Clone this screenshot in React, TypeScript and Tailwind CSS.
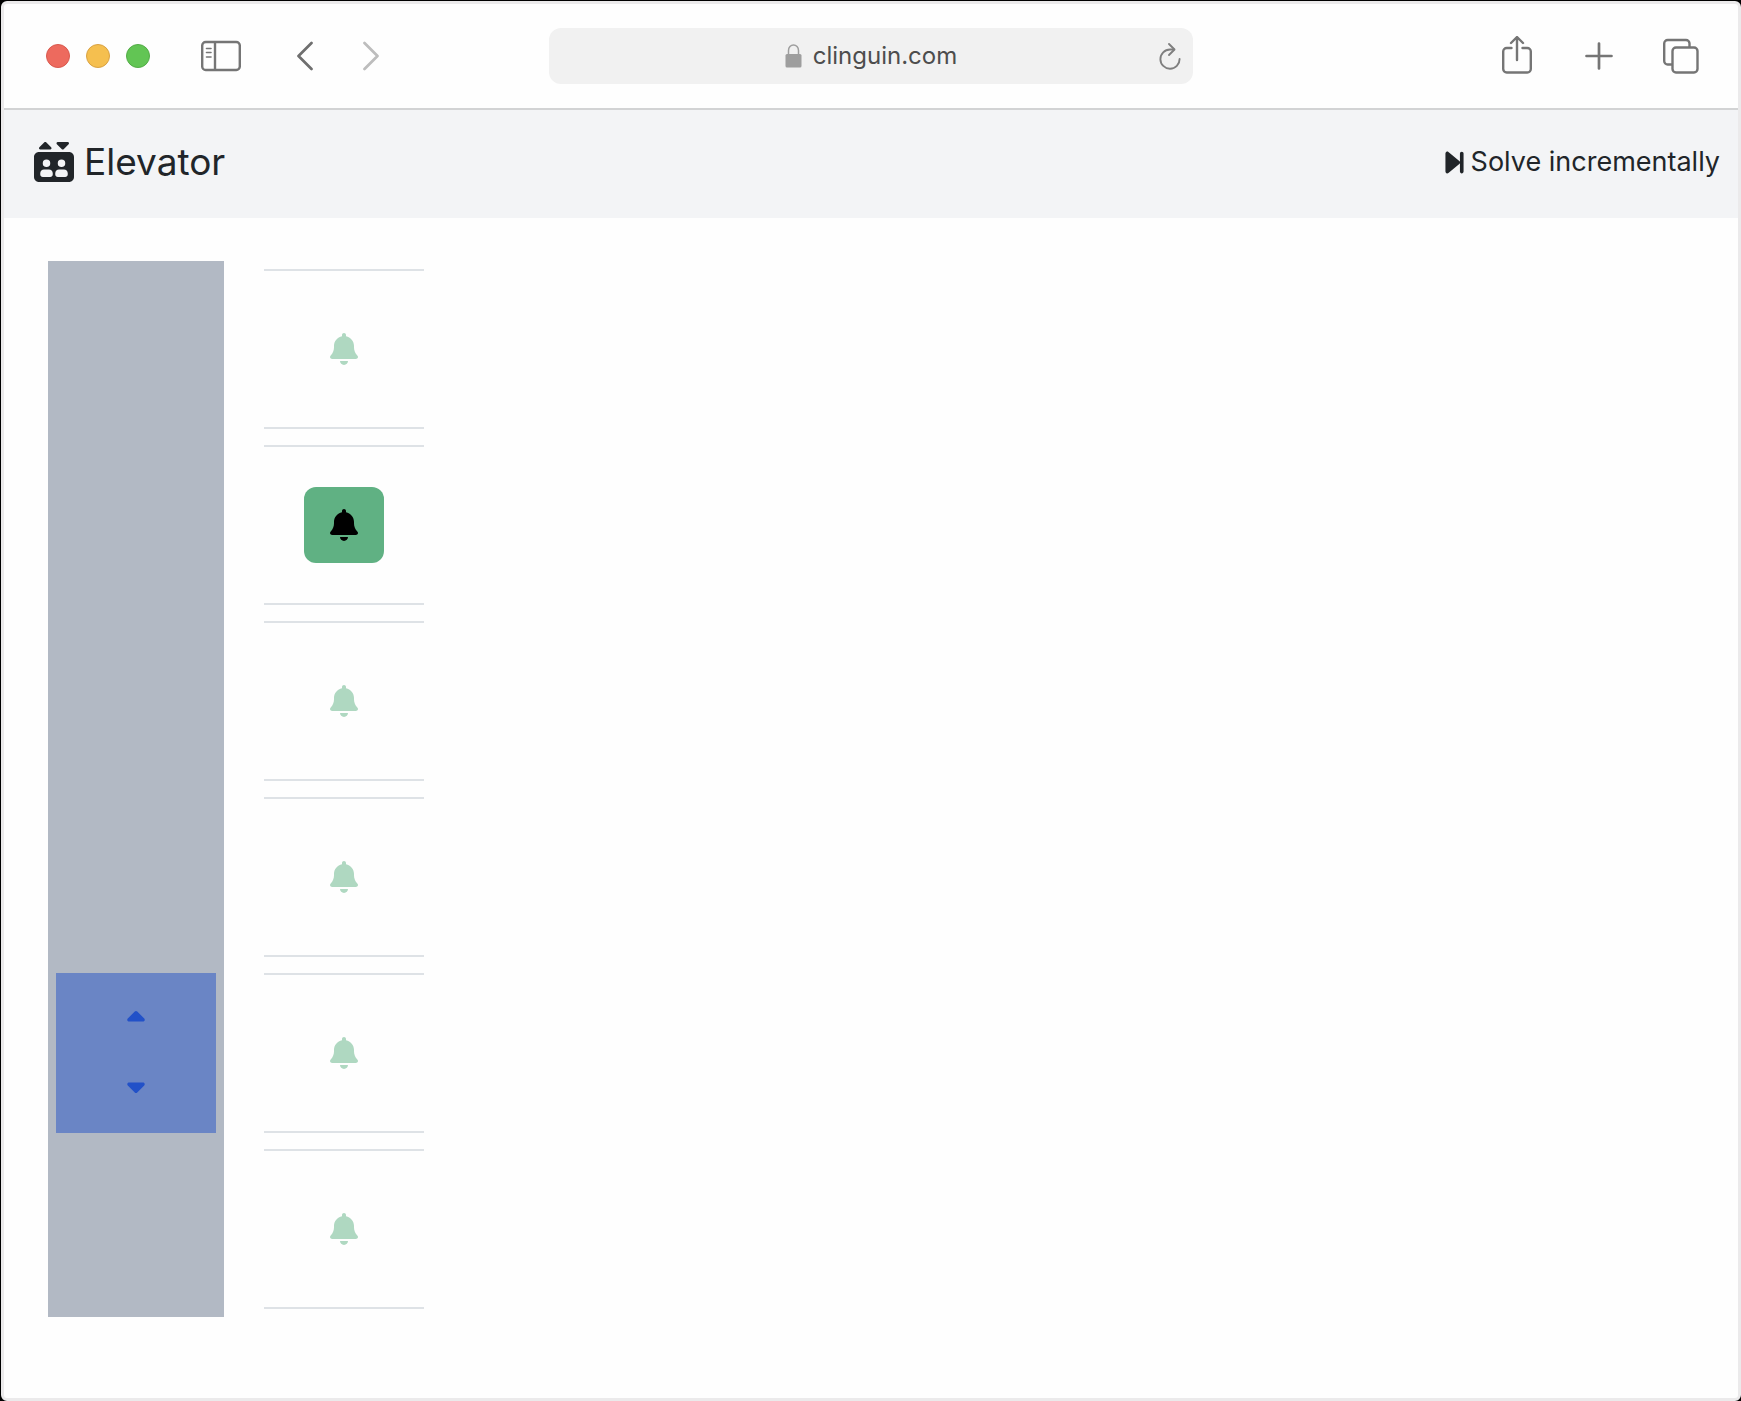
import React from "react";
import { FaBell, FaCaretDown, FaCaretUp, FaElevator, FaForwardStep } from "react-icons/fa6";

type Floor = { id: number; called: boolean };

const floors: Floor[] = [
  { id: 6, called: false },
  { id: 5, called: true },
  { id: 4, called: false },
  { id: 3, called: false },
  { id: 2, called: false },
  { id: 1, called: false },
];

const CAR_FLOOR = 2;

function Toolbar() {
  return (
    <div className="grid h-[106px] grid-cols-[1fr_644px_1fr] items-center border-b-2 border-[#d2d3d4] px-[39px]">
      <div className="flex items-center pl-[3px]">
        <div className="flex gap-4">
          <button aria-label="Close" className="size-6 rounded-full border border-[#d9594e] bg-[#ed6a5e]" />
          <button aria-label="Minimize" className="size-6 rounded-full border border-[#d9a243] bg-[#f5bf4f]" />
          <button aria-label="Zoom" className="size-6 rounded-full border border-[#53ac47] bg-[#62c554]" />
        </div>
        <button aria-label="Sidebar" className="ml-[51px] text-[#757575]">
          <svg width="40" height="32" viewBox="0 0 40 32" fill="none" stroke="currentColor" strokeWidth="2.400">
            <rect x="1.200" y="2" width="37.600" height="28" rx="3.500" />
            <path d="M14 2v28" />
            <path d="M5.500 8.500h4.500M5.500 12.500h4.500M5.500 17h4.500" strokeWidth="1.600" strokeLinecap="round" />
          </svg>
        </button>
        <button aria-label="Back" className="ml-14 text-[#6f6f6f]">
          <svg width="16" height="30" viewBox="0 0 16 30" fill="none" stroke="currentColor" strokeWidth="2.700" strokeLinecap="round" strokeLinejoin="round">
            <path d="M14.500 2L1.500 15l13 13" />
          </svg>
        </button>
        <button aria-label="Forward" className="ml-[50px] text-[#bdbdbd]">
          <svg width="16" height="30" viewBox="0 0 16 30" fill="none" stroke="currentColor" strokeWidth="2.700" strokeLinecap="round" strokeLinejoin="round">
            <path d="M1.500 2l13 13-13 13" />
          </svg>
        </button>
      </div>

      <div className="grid h-14 grid-cols-[1fr_auto_1fr] items-center rounded-xl bg-[#f1f1f1] px-3">
        <span />
        <div className="flex items-center gap-[11px] text-2xl leading-8 text-[#4d4d4d]">
          <svg width="17" height="24" viewBox="0 0 17 24" fill="none" className="text-[#9e9e9e]">
            <rect x="0.500" y="10" width="16" height="13.500" rx="1.500" fill="currentColor" />
            <path d="M3.500 11V6.500a5 5.500 0 0 1 10 0V11" stroke="currentColor" strokeWidth="1.500" />
          </svg>
          <span>clinguin.com</span>
        </div>
        <button aria-label="Reload" className="justify-self-end text-[#7f7f7f]">
          <svg width="22" height="28" viewBox="0 0 22 28" fill="none" stroke="currentColor" strokeWidth="1.900" strokeLinecap="round" strokeLinejoin="round">
            <path d="M15 7.500H11A9.600 9.600 0 1 0 20.600 17" />
            <path d="M10 2l5.500 5.500L10 13" />
          </svg>
        </button>
      </div>

      <div className="flex items-center justify-end text-[#757575]">
        <button aria-label="Share">
          <svg width="30" height="40" viewBox="0 1 30 40" fill="none" stroke="currentColor" strokeWidth="2.400" strokeLinecap="round" strokeLinejoin="round">
            <path d="M9.500 13H4.700A3.500 3.500 0 0 0 1.200 16.500v17.500A3.500 3.500 0 0 0 4.700 37.500h20.600a3.500 3.500 0 0 0 3.500-3.500v-17.500a3.500 3.500 0 0 0-3.500-3.500H20.500" />
            <path d="M15 25V2.500M9 8l6-6 6 6" />
          </svg>
        </button>
        <button aria-label="New tab" className="ml-[53px]">
          <svg width="28" height="28" viewBox="0 0 28 28" fill="none" stroke="currentColor" strokeWidth="2.700" strokeLinecap="round">
            <path d="M14 1.500v25M1.500 14h25" />
          </svg>
        </button>
        <button aria-label="Tab overview" className="ml-[50px]">
          <svg width="36" height="36" viewBox="0 0 36 36" fill="none" stroke="currentColor" strokeWidth="2.400">
            <rect x="9.500" y="9.500" width="25" height="25" rx="3.500" />
            <path d="M9.500 26.500h-4.800A3.500 3.500 0 0 1 1.200 23V5.500a3.500 3.500 0 0 1 3.500-3.500h18.300A3.500 3.500 0 0 1 26.500 5.500v4" />
          </svg>
        </button>
      </div>
    </div>
  );
}

function Header() {
  return (
    <header className="flex h-[108px] items-center justify-between bg-[#f3f4f6] pb-1 pl-[30px] pr-[18px] text-[#212529]">
      <h1 className="flex items-center gap-2.5 text-[37px] leading-[60px]">
        <FaElevator className="size-10" />
        <span>Elevator</span>
      </h1>
      <button className="flex items-center gap-0.5 text-[27px] leading-[44px]">
        <FaForwardStep className="size-[29px]" />
        <span>Solve incrementally</span>
      </button>
    </header>
  );
}

function Shaft() {
  return (
    <div className="w-44 bg-[#b2b9c4]">
      {floors.map((floor) => (
        <div key={floor.id} className="h-44 p-2">
          {floor.id === CAR_FLOOR && (
            <div className="flex h-full flex-col items-center justify-center bg-[#6a85c5] pb-0.5 text-[28px] text-[#2251c8]">
              <button aria-label="Up" className="flex h-[68px] w-20 items-center justify-center">
                <FaCaretUp />
              </button>
              <button aria-label="Down" className="flex h-[68px] w-20 items-center justify-center">
                <FaCaretDown />
              </button>
            </div>
          )}
        </div>
      ))}
    </div>
  );
}

function Calls() {
  return (
    <div className="w-44">
      {floors.map((floor) => (
        <div key={floor.id} className="h-44 p-2">
          <div className="flex h-full items-center justify-center border-y-2 border-[#dee2e6]">
            <button
              aria-label={`Call elevator to floor ${floor.id}`}
              className={
                floor.called
                  ? "flex h-[76px] w-20 items-center justify-center rounded-xl bg-[#60b183] text-[32px] text-black"
                  : "flex h-[76px] w-20 items-center justify-center rounded-xl text-[32px] text-[#afd8c1]"
              }
            >
              <FaBell />
            </button>
          </div>
        </div>
      ))}
    </div>
  );
}

export default function App() {
  return (
    <div className="flex min-h-screen flex-col bg-black pl-px pt-px font-['Inter','Liberation_Sans',sans-serif]">
      <div className="flex grow flex-col rounded-md border-[3px] border-[#ebeaeb] bg-[#fefefe]">
        <Toolbar />
        <Header />
        <main className="flex gap-8 px-11 py-[43px]">
          <Shaft />
          <Calls />
        </main>
      </div>
    </div>
  );
}
